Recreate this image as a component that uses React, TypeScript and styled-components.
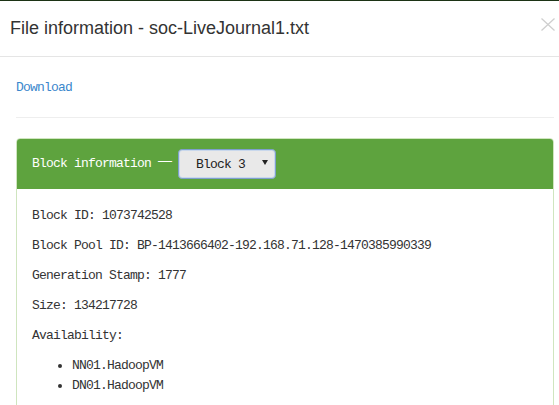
import React from "react";
import styled, { createGlobalStyle } from "styled-components";

const GlobalStyle = createGlobalStyle`
  html, body {
    margin: 0;
    padding: 0;
    background: #1c3315;
    overflow: hidden;
  }
`;

const mono = `"Liberation Mono", "DejaVu Sans Mono", monospace`;

const Modal = styled.div`
  margin-top: 1px;
  width: 570px;
  min-height: 404px;
  background: #fff;
`;

const Header = styled.div`
  display: flex;
  justify-content: space-between;
  align-items: flex-start;
  padding: 14px 15px 15px 10px;
  border-bottom: 1px solid #e5e5e5;
`;

const Title = styled.h4`
  margin: 0;
  font-family: "Liberation Sans", Arial, sans-serif;
  font-size: 18px;
  line-height: 26px;
  font-weight: normal;
  color: #333;
`;

const Close = styled.button`
  margin-top: 3px;
  padding: 0;
  border: 0;
  background: transparent;
  display: flex;
  cursor: pointer;
`;

const Body = styled.div`
  padding: 21px 16px 0 16px;
  font-family: ${mono};
  font-size: 13px;
  letter-spacing: -0.8px;
  line-height: 20px;
  color: #333;
`;

const Link = styled.a`
  display: block;
  color: #3a87cc;
  text-decoration: none;
`;

const Rule = styled.hr`
  margin: 19px 0 20px;
  border: 0;
  border-top: 1px solid #eee;
  height: 0;
`;

const Panel = styled.div`
  border: 1px solid #cfe5bf;
  border-radius: 4px;
  overflow: hidden;
`;

const PanelHeading = styled.div`
  height: 50px;
  padding: 0 15px;
  display: flex;
  align-items: center;
  background: #5ea33e;
  color: #fff;
`;

const Dash = styled.span`
  font-family: "Liberation Sans", Arial, sans-serif;
  font-size: 14px;
  line-height: 14px;
  letter-spacing: 0;
  margin: 0 6px 9px 7px;
`;

const SelectBox = styled.div`
  box-sizing: border-box;
  width: 98px;
  height: 30px;
  display: flex;
  align-items: center;
  justify-content: space-between;
  padding: 2px 7px 0 17px;
  background: #e9e9e9;
  border: 1px solid #7e9fcc;
  box-shadow: inset 0 0 0 1px #c9d8ec;
  border-radius: 4px;
  color: #222;
`;

const Arrow = styled.span`
  width: 0;
  height: 0;
  margin-top: -5px;
  border-left: 3px solid transparent;
  border-right: 3px solid transparent;
  border-top: 5px solid #222;
`;

const PanelBody = styled.div`
  padding: 17px 15px 15px;
  background: #fff;
`;

const Para = styled.p`
  margin: 0 0 10px;
`;

const List = styled.ul`
  margin: 0 0 10px;
  padding-left: 40px;
`;

export default function App() {
  return (
    <>
      <GlobalStyle />
      <Modal>
        <Header>
          <Title>File information - soc-LiveJournal1.txt</Title>
          <Close aria-label="Close">
            <svg width="14" height="13" viewBox="0 0 14 13">
              <path d="M0.5 0.5 L13.5 12.5 M13.5 0.5 L0.5 12.5" stroke="#cfcfcf" strokeWidth="1.3" fill="none" />
            </svg>
          </Close>
        </Header>
        <Body>
          <Link href="#">Download</Link>
          <Rule />
          <Panel>
            <PanelHeading>
              <span>Block information</span>
              <Dash>—</Dash>
              <SelectBox>
                <span>Block 3</span>
                <Arrow />
              </SelectBox>
            </PanelHeading>
            <PanelBody>
              <Para>Block ID: 1073742528</Para>
              <Para>Block Pool ID: BP-1413666402-192.168.71.128-1470385990339</Para>
              <Para>Generation Stamp: 1777</Para>
              <Para>Size: 134217728</Para>
              <Para>Availability:</Para>
              <List>
                <li>NN01.HadoopVM</li>
                <li>DN01.HadoopVM</li>
              </List>
            </PanelBody>
          </Panel>
        </Body>
      </Modal>
    </>
  );
}
